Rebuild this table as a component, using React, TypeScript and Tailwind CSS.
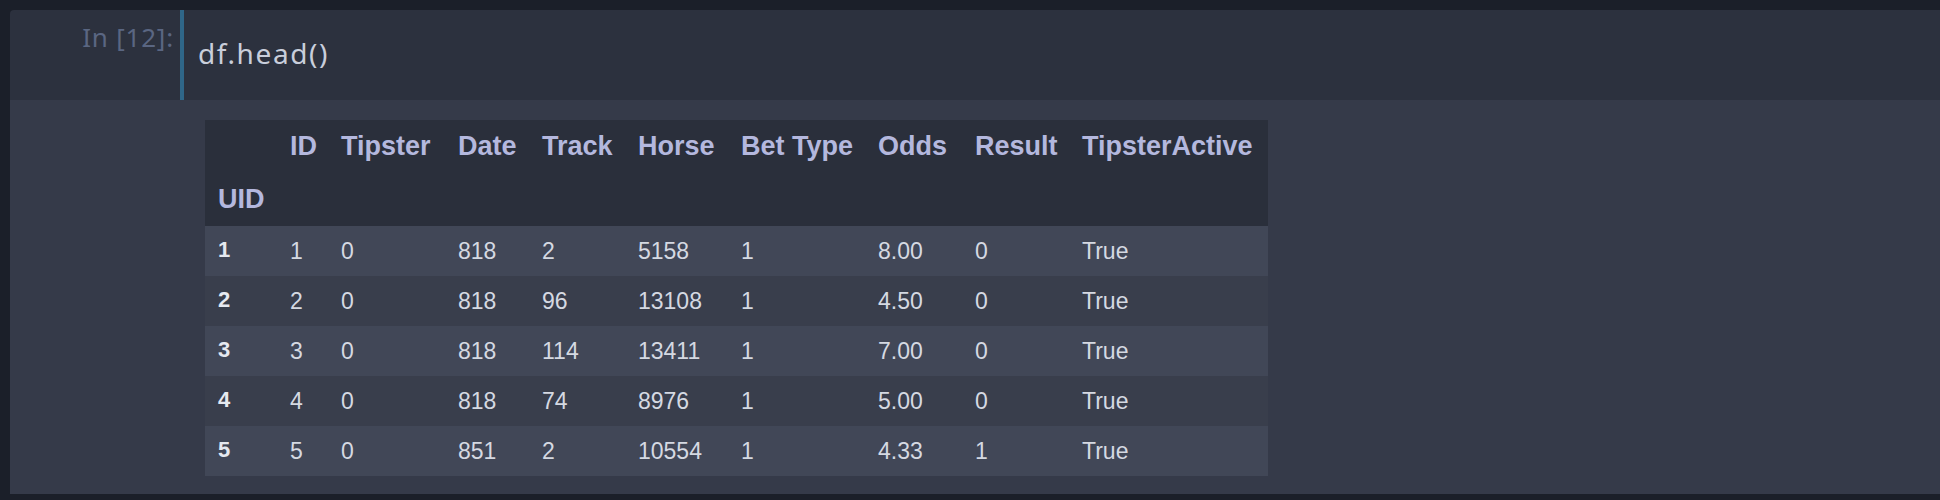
import React from "react";

const cols = ["ID", "Tipster", "Date", "Track", "Horse", "Bet Type", "Odds", "Result", "TipsterActive"];
const rows: string[][] = [
  ["1", "1", "0", "818", "2", "5158", "1", "8.00", "0", "True"],
  ["2", "2", "0", "818", "96", "13108", "1", "4.50", "0", "True"],
  ["3", "3", "0", "818", "114", "13411", "1", "7.00", "0", "True"],
  ["4", "4", "0", "818", "74", "8976", "1", "5.00", "0", "True"],
  ["5", "5", "0", "851", "2", "10554", "1", "4.33", "1", "True"],
];

export default function App() {
  return (
    <div className="w-[1940px] h-[500px] bg-[#1b1f29] pt-[10px] pl-[10px] overflow-hidden">
      <div className="flex flex-col rounded-tl-[4px] overflow-hidden">
        {/* input */}
        <div className="flex h-[90px] bg-[#2c313e]">
          <div
            className="w-[170px] shrink-0 text-right pr-[6px] pt-[12px] text-[26px] leading-[30px] tracking-[0.8px] text-[#5a6682]"
            style={{ fontFamily: '"Noto Sans", sans-serif' }}
          >
            In [12]:
          </div>
          <div className="w-[4px] shrink-0 bg-[#2f6688]" />
          <div
            className="pl-[14px] pt-[24px] text-[28px] leading-[38px] tracking-[1.6px] text-[#c9cedb]"
            style={{ fontFamily: '"Noto Sans", sans-serif' }}
          >
            df.head()
          </div>
        </div>
        {/* output */}
        <div className="h-[394px] bg-[#353a49] pl-[195px] pt-[20px]">
          <table
            className="table-fixed border-collapse"
            style={{ fontFamily: '"Liberation Sans", Arial, sans-serif' }}
          >
            <colgroup>
              <col className="w-[72px]" />
              <col className="w-[51px]" />
              <col className="w-[117px]" />
              <col className="w-[84px]" />
              <col className="w-[96px]" />
              <col className="w-[103px]" />
              <col className="w-[137px]" />
              <col className="w-[97px]" />
              <col className="w-[107px]" />
              <col className="w-[199px]" />
            </colgroup>
            <thead className="bg-[#2a2f3b] text-[#b4b8de] font-bold text-[27px]">
              <tr className="h-[53px]">
                <th className="p-0 pl-[13px] text-left"></th>
                {cols.map((c) => (
                  <th key={c} className="p-0 pl-[13px] text-left font-bold whitespace-nowrap">
                    {c}
                  </th>
                ))}
              </tr>
              <tr className="h-[53px]">
                <th className="p-0 pl-[13px] text-left font-bold">UID</th>
                {cols.map((c) => (
                  <th key={c} className="p-0" />
                ))}
              </tr>
            </thead>
            <tbody className="text-[23px]">
              {rows.map((r, i) => (
                <tr key={i} className={i % 2 === 0 ? "h-[50px] bg-[#414757]" : "h-[50px] bg-[#393e4c]"}>
                  {r.map((v, j) =>
                    j === 0 ? (
                      <th key={j} className="p-0 pl-[13px] pb-[4px] text-left font-bold text-[22px] text-[#e6e9f0]">
                        {v}
                      </th>
                    ) : (
                      <td key={j} className="p-0 pl-[13px] text-left text-[#d5d9e2] whitespace-nowrap">
                        {v}
                      </td>
                    )
                  )}
                </tr>
              ))}
            </tbody>
          </table>
        </div>
      </div>
    </div>
  );
}
